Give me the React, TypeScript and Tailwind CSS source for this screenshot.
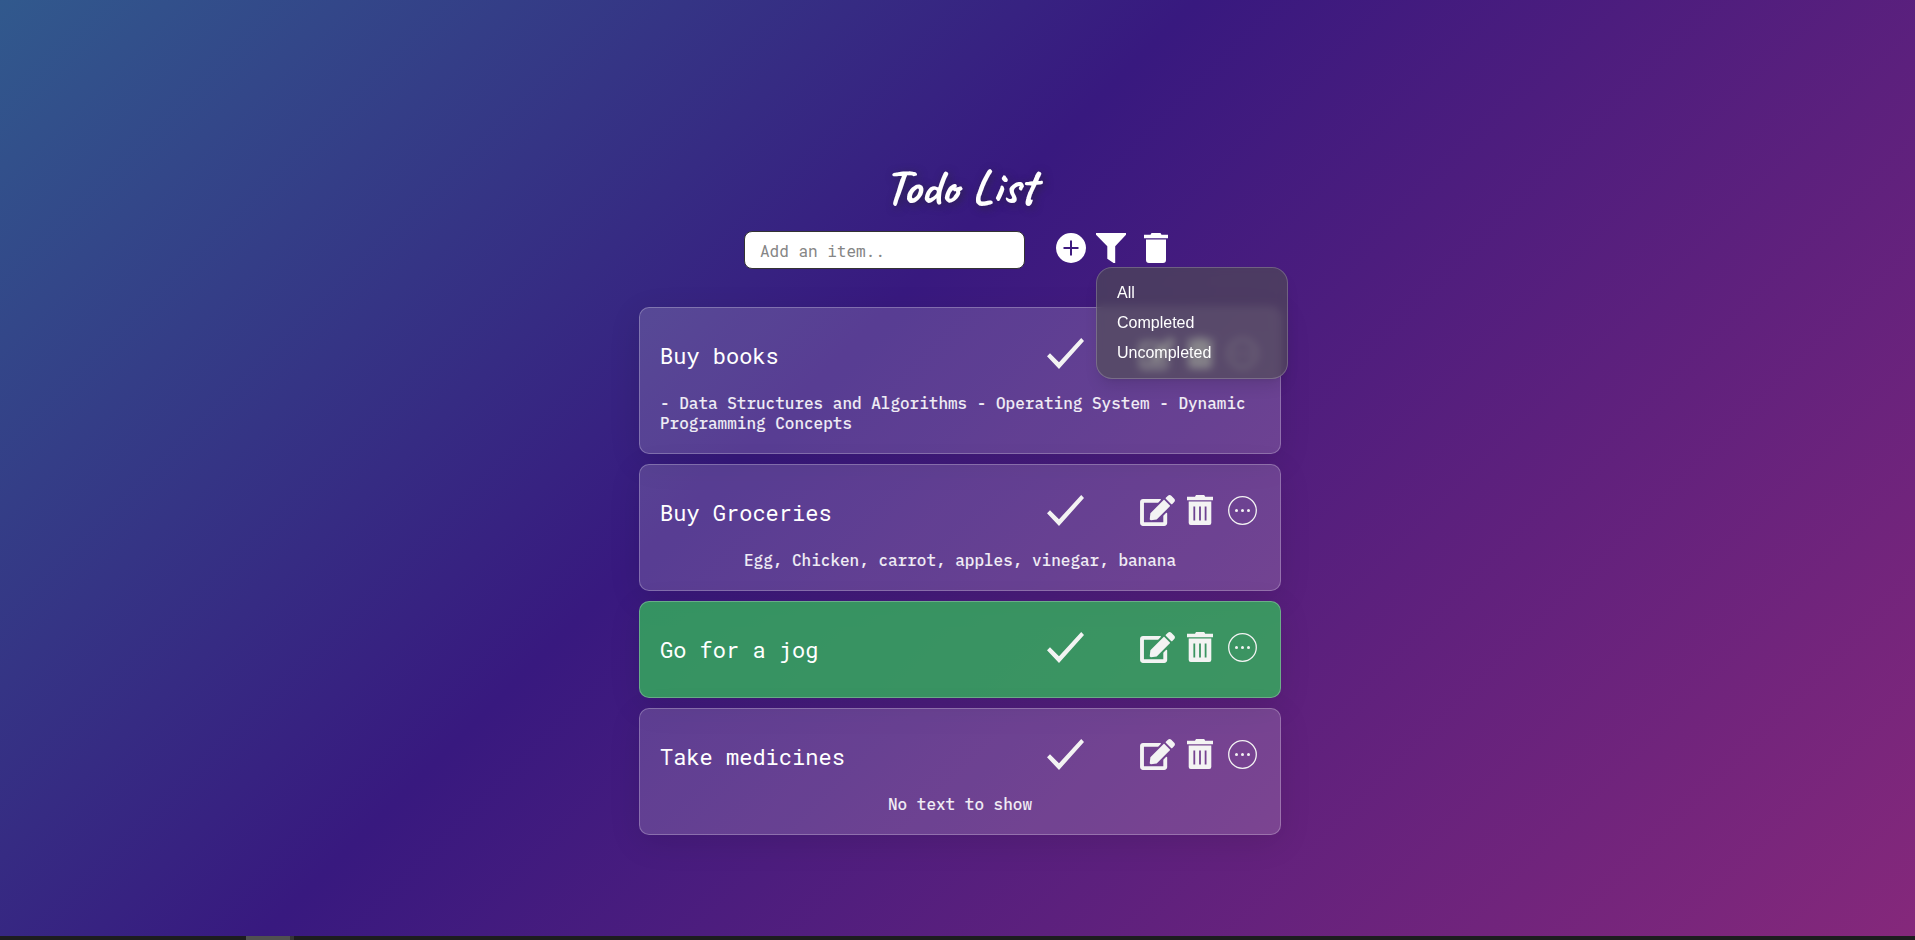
import { ReactNode } from 'react';
import { FaEdit } from 'react-icons/fa';

type Todo = { title: string; note?: string; done?: boolean };

const todos: Todo[] = [
  { title: 'Buy books', note: '- Data Structures and Algorithms - Operating System - Dynamic Programming Concepts' },
  { title: 'Buy Groceries', note: 'Egg, Chicken, carrot, apples, vinegar, banana' },
  { title: 'Go for a jog', done: true },
  { title: 'Take medicines', note: 'No text to show' },
];

const mono = "font-['Roboto_Mono','DejaVu_Sans_Mono','Liberation_Mono',monospace]";

function IconButton({ label, className = '', children }: { label: string; className?: string; children: ReactNode }) {
  return (
    <button type="button" aria-label={label} className={`flex shrink-0 items-center justify-center ${className}`}>
      {children}
    </button>
  );
}

function AddIcon() {
  return (
    <svg viewBox="0 0 30 30" className="size-[30px] fill-current" aria-hidden="true">
      <path
        fillRule="evenodd"
        d="M15 0a15 15 0 1 0 0 30a15 15 0 1 0 0-30ZM14 7.5h2V14h6.5v2H16v6.5h-2V16H7.5v-2H14Z"
      />
    </svg>
  );
}

function FilterIcon() {
  return (
    <svg viewBox="0 0 30 30" className="size-[30px] fill-current" aria-hidden="true">
      <path d="M0 0H30V1.7L19.2 13.2V30H17.5L11.3 25.7V13.2L0 1.7Z" />
    </svg>
  );
}

function SolidTrashIcon() {
  return (
    <svg viewBox="0 0 24 30" className="h-[30px] w-6 fill-current" aria-hidden="true">
      <path d="M7.5 0h9l1 1.7H24v3.5H0V1.7h6.5ZM2 6.4H22V27a3 3 0 0 1-3 3H5a3 3 0 0 1-3-3Z" />
    </svg>
  );
}

function SlattedTrashIcon() {
  return (
    <svg viewBox="0 0 26 30" className="h-[30px] w-[26px] fill-current" aria-hidden="true">
      <path
        fillRule="evenodd"
        d="M9 0h8.2l1 1.7H26v3.6H0V1.7h8ZM1.7 6.6H24.3V28a2 2 0 0 1-2 2H3.7a2 2 0 0 1-2-2ZM6.4 11.5v14h1.8v-14ZM12.1 11.5v14h1.8v-14ZM17.7 11.5v14h1.8v-14Z"
      />
    </svg>
  );
}

function CheckIcon() {
  return (
    <svg viewBox="0 0 37 31" className="h-[31px] w-[37px] fill-current" aria-hidden="true">
      <path d="M0 18.2 3 15.2 12 24.3 34.2 0 37 3 12 31Z" />
    </svg>
  );
}

function MoreIcon() {
  return (
    <svg viewBox="0 0 29 29" className="size-[29px]" aria-hidden="true">
      <circle cx="14.5" cy="14.5" r="13.8" fill="none" stroke="currentColor" strokeWidth="1.3" />
      <circle cx="8.5" cy="14.5" r="1.5" fill="currentColor" />
      <circle cx="14.5" cy="14.5" r="1.5" fill="currentColor" />
      <circle cx="20.5" cy="14.5" r="1.5" fill="currentColor" />
    </svg>
  );
}

function Card({ title, note, done }: Todo) {
  return (
    <li
      className={`rounded-[10px] border border-white/25 p-5 shadow-[0_8px_32px_rgba(0,0,0,0.1)] ${
        done ? 'bg-[#35b15b]/80' : 'bg-white/[0.16]'
      }`}
    >
      <div className="flex h-[55px] items-start text-[#f3f3f3]">
        <h2 className={`grow pt-[14px] text-[22px] leading-[28px] text-white ${mono}`}>{title}</h2>
        <IconButton label="Complete" className="mr-14 mt-[10px]">
          <CheckIcon />
        </IconButton>
        <IconButton label="Edit" className="mr-3 mt-[10px]">
          <FaEdit className="h-[31px] w-[35px]" />
        </IconButton>
        <IconButton label="Delete" className="mr-[15px] mt-[10px]">
          <SlattedTrashIcon />
        </IconButton>
        <IconButton label="More" className="mr-[3px] mt-[11px]">
          <MoreIcon />
        </IconButton>
      </div>
      {note && (
        <p className="mx-auto mt-[10px] w-fit font-['IBM_Plex_Mono','Liberation_Mono',monospace] text-[16px] font-medium leading-5 text-white/90">
          {note}
        </p>
      )}
    </li>
  );
}

export default function App() {
  return (
    <div className="flex min-h-screen flex-col bg-[#1d1d1f]">
      <main className="flex grow flex-col items-center bg-[linear-gradient(135deg,#31598d_0%,#38197f_42%,#85287b_100%)] pl-[5px] pt-[155px]">
        <h1 className="font-['Caveat','Lato',cursive] text-[50px] font-semibold leading-[64px] text-white [text-shadow:2px_2px_8px_rgba(40,40,40,0.6)]">
          Todo List
        </h1>
        <form className="mt-3 flex items-start pr-2 text-white" onSubmit={(e) => e.preventDefault()}>
          <input
            type="text"
            aria-label="Add an item"
            placeholder="Add an item.."
            className={`h-[38px] w-[281px] rounded-lg border border-[#333] bg-white px-[15px] text-[16px] text-[#333] placeholder:text-[#858585] ${mono}`}
          />
          <IconButton label="Add" className="ml-[31px] mt-0.5">
            <AddIcon />
          </IconButton>
          <div className="relative ml-[10px] mt-0.5">
            <IconButton label="Filter">
              <FilterIcon />
            </IconButton>
            <ul className="absolute left-0 top-[34px] z-10 w-[192px] rounded-2xl border border-white/20 bg-[#505050]/60 px-5 py-[10px] font-['Liberation_Sans',sans-serif] text-[16px] leading-[30px] shadow-lg backdrop-blur-[4px]">
              <li><button type="button">All</button></li>
              <li><button type="button">Completed</button></li>
              <li><button type="button">Uncompleted</button></li>
            </ul>
          </div>
          <IconButton label="Delete all" className="ml-[18px] mt-0.5">
            <SolidTrashIcon />
          </IconButton>
        </form>
        <ul className="mb-[101px] mt-[38px] flex w-full max-w-[642px] flex-col gap-[10px]">
          {todos.map((t) => (
            <Card key={t.title} {...t} />
          ))}
        </ul>
      </main>
      <footer className="h-1 bg-[#1d1d1f] pl-[246px]">
        <div className="h-1 w-12 border-r-4 border-[#363636] bg-[#505050]" />
      </footer>
    </div>
  );
}
